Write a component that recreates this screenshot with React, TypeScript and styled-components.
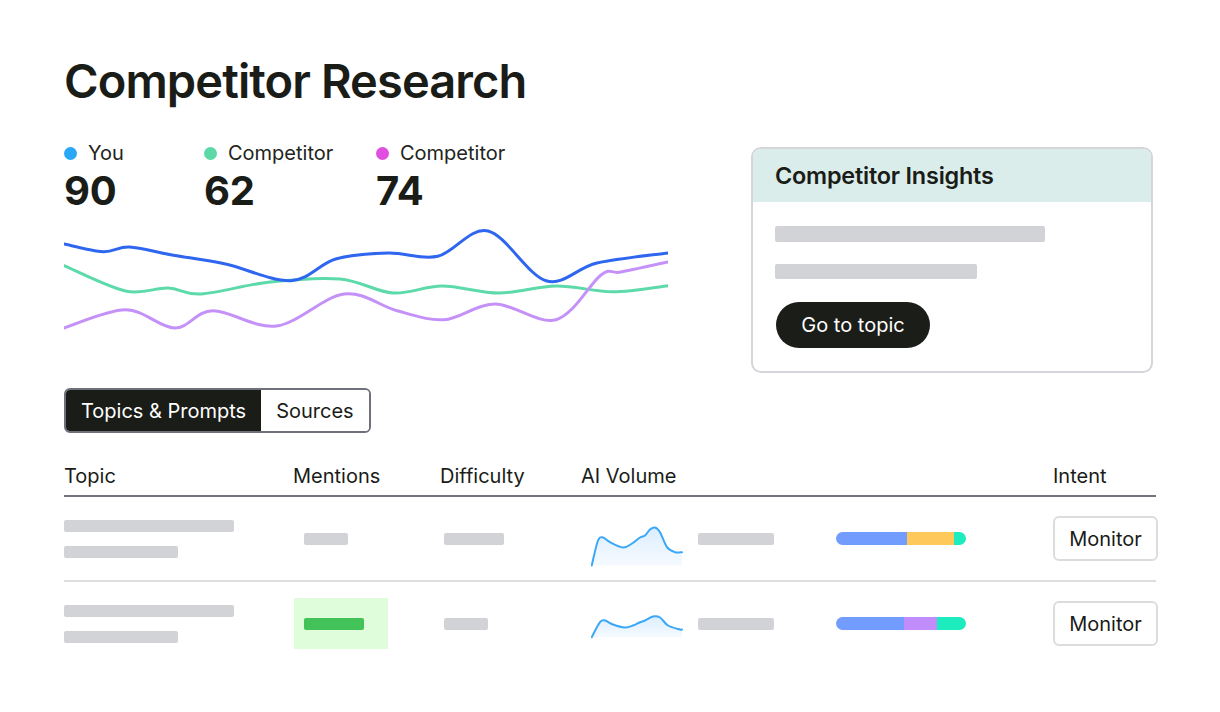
import React from "react";
import styled, { createGlobalStyle } from "styled-components";

const GlobalStyle = createGlobalStyle`
  html, body { margin: 0; padding: 0; background: #ffffff; }
  body { font-family: Inter, "Noto Sans", "Liberation Sans", sans-serif; color: #1a1c18; }
  * { box-sizing: border-box; }
`;

const INK = "#1a1c18";
const GRAY = "#d2d3d6";

type Pt = [number, number];

function smooth(pts: Pt[]): string {
  let d = `M${pts[0][0]},${pts[0][1]}`;
  for (let i = 0; i < pts.length - 1; i++) {
    const p0 = pts[i - 1] || pts[i];
    const p1 = pts[i];
    const p2 = pts[i + 1];
    const p3 = pts[i + 2] || p2;
    const c1x = p1[0] + (p2[0] - p0[0]) / 6;
    const c1y = p1[1] + (p2[1] - p0[1]) / 6;
    const c2x = p2[0] - (p3[0] - p1[0]) / 6;
    const c2y = p2[1] - (p3[1] - p1[1]) / 6;
    d += ` C${c1x.toFixed(1)},${c1y.toFixed(1)} ${c2x.toFixed(1)},${c2y.toFixed(1)} ${p2[0]},${p2[1]}`;
  }
  return d;
}

const bluePts: Pt[] = [
  [0, 19], [39, 26.7], [65.6, 22], [108, 30], [161.5, 39], [226.8, 55.7], [271.7, 34],
  [324.8, 28], [373.8, 31.3], [424, 6], [482, 55.7], [533, 38], [604, 28],
];
const greenPts: Pt[] = [
  [0, 40.7], [61.5, 66], [104, 63], [137, 69], [206, 57], [276, 54], [329, 68],
  [378, 61], [435, 68], [492, 61], [549, 66.7], [604, 60.7],
];
const purplePts: Pt[] = [
  [0, 103], [61.5, 84.7], [110.5, 103], [149, 85.7], [212.5, 101], [280, 69], [333, 85.7],
  [380, 94.7], [431, 79], [492, 94.7], [537, 50], [557, 47], [604, 37],
];

const spark1: Pt[] = [
  [0.7, 56.5], [7, 31.5], [12, 28.5], [19, 33.2], [32, 38.5], [41, 34.5], [49, 28.5],
  [54, 26.5], [59, 20.5], [64, 18.5], [69, 23.2], [76, 38.2], [84, 43.2], [91, 43.2],
];
const spark2: Pt[] = [
  [0.7, 43.2], [9, 28.2], [14, 26.5], [22, 30.5], [34, 33.5], [42, 31.5], [49, 28.2],
  [54, 26.5], [62, 22.5], [69, 23.5], [77, 31.5], [89, 35.5], [91, 35.5],
];

const Page = styled.div`
  width: 1092px;
  margin-left: 64px;
  padding-top: 52px;
`;

const Title = styled.h1`
  margin: 0;
  font-size: 47px;
  line-height: 58px;
  font-weight: 600;
  letter-spacing: -0.9px;
  color: ${INK};
`;

const TopRow = styled.div`
  display: flex;
  align-items: flex-start;
  gap: 83px;
  margin-top: 31px;
`;

const ChartColumn = styled.div`
  width: 604px;
  display: flex;
  flex-direction: column;
`;

const Legend = styled.div`
  display: flex;
`;

const LegendItem = styled.div<{ $w?: number }>`
  display: flex;
  flex-direction: column;
  gap: 2px;
  width: ${(p) => (p.$w ? `${p.$w}px` : "auto")};
`;

const LegendLabel = styled.div`
  display: flex;
  align-items: center;
  gap: 11px;
  font-size: 20px;
  line-height: 24px;
  color: #222420;
`;

const Dot = styled.span<{ $c: string }>`
  width: 13px;
  height: 13px;
  border-radius: 50%;
  background: ${(p) => p.$c};
  flex: none;
`;

const BigNumber = styled.div`
  font-size: 40px;
  line-height: 48px;
  font-weight: 700;
  color: ${INK};
  letter-spacing: -0.3px;
`;

const ChartSvg = styled.svg`
  display: block;
  margin-top: 10px;
`;

const Card = styled.div`
  width: 402px;
  margin-top: 6px;
  border: 2px solid #d6d6da;
  border-radius: 10px;
  overflow: hidden;
  background: #fff;
`;

const CardHeader = styled.div`
  height: 53px;
  display: flex;
  align-items: center;
  padding: 0 22px;
  background: #dbedea;
  font-size: 23.4px;
  font-weight: 600;
  letter-spacing: -0.2px;
  color: ${INK};
`;

const CardBody = styled.div`
  display: flex;
  flex-direction: column;
  align-items: flex-start;
  padding: 24px 22px 23px;
`;

const Bar = styled.div<{ $w: number; $h?: number; $c?: string; $mt?: number; $ml?: number }>`
  width: ${(p) => p.$w}px;
  height: ${(p) => p.$h ?? 12}px;
  background: ${(p) => p.$c ?? GRAY};
  border-radius: 2px;
  margin-top: ${(p) => p.$mt ?? 0}px;
  margin-left: ${(p) => p.$ml ?? 0}px;
  flex: none;
`;

const PillButton = styled.button`
  margin-top: 23px;
  margin-left: 1px;
  height: 46px;
  width: 154px;
  padding: 0;
  border: none;
  border-radius: 23px;
  background: #1b1d19;
  color: #fff;
  font-family: inherit;
  font-size: 20px;
`;

const Tabs = styled.div`
  display: inline-flex;
  margin-top: 15px;
  border: 2px solid #6e707a;
  border-radius: 6px;
  overflow: hidden;
`;

const Tab = styled.div<{ $active?: boolean }>`
  height: 41px;
  line-height: 42px;
  padding: 0 ${(p) => (p.$active ? 15 : 15)}px;
  font-size: 20px;
  background: ${(p) => (p.$active ? "#1a1c18" : "#fff")};
  color: ${(p) => (p.$active ? "#fff" : INK)};
`;

const cols = "229px 147px 141px 255px 217px 1fr";

const Table = styled.div`
  margin-top: 31px;
`;

const HeaderRow = styled.div`
  display: grid;
  grid-template-columns: ${cols};
  padding-bottom: 7px;
  border-bottom: 2px solid #72747c;
  font-size: 20px;
  line-height: 24px;
  color: ${INK};
`;

const Row = styled.div<{ $last?: boolean }>`
  display: grid;
  grid-template-columns: ${cols};
  align-items: center;
  height: ${(p) => (p.$last ? 83 : 85)}px;
  border-bottom: ${(p) => (p.$last ? "none" : "2px solid #dedede")};
`;

const TopicCell = styled.div`
  display: flex;
  flex-direction: column;
  gap: 14px;
`;

const MentionBox = styled.div<{ $hl?: boolean }>`
  width: 94px;
  height: 51px;
  margin-left: 1px;
  padding-left: 10px;
  display: flex;
  align-items: center;
  background: ${(p) => (p.$hl ? "#e0fddb" : "transparent")};
`;

const AiCell = styled.div`
  display: flex;
  align-items: center;
`;

const SparkSvg = styled.svg`
  display: block;
  margin-left: 10px;
  flex: none;
`;

const Stack = styled.div`
  display: flex;
  width: 130px;
  height: 13px;
  border-radius: 7px;
  overflow: hidden;
`;

const Seg = styled.div<{ $w: number; $c: string }>`
  width: ${(p) => p.$w}px;
  background: ${(p) => p.$c};
  flex: none;
`;

const MonitorButton = styled.button`
  width: 105px;
  height: 45px;
  border: 2px solid #dcdcdc;
  border-radius: 6px;
  background: #fff;
  font-family: inherit;
  font-size: 20px;
  color: ${INK};
  padding: 0;
`;

function Sparkline({ pts, id }: { pts: Pt[]; id: string }) {
  const line = smooth(pts);
  const last = pts[pts.length - 1];
  const bottom = Math.max(...pts.map((p) => p[1]));
  const area = `${line} L${last[0]},${bottom} L${pts[0][0]},${bottom} Z`;
  return (
    <SparkSvg width="92" height="60" viewBox="0 0 92 60">
      <defs>
        <linearGradient id={id} x1="0" y1="0" x2="0" y2="1">
          <stop offset="0" stopColor="#d6ebff" stopOpacity="0.9" />
          <stop offset="1" stopColor="#eef6ff" stopOpacity="0.6" />
        </linearGradient>
      </defs>
      <path d={area} fill={`url(#${id})`} />
      <path d={line} fill="none" stroke="#3aa8f5" strokeWidth="2" strokeLinecap="round" />
    </SparkSvg>
  );
}

type RowData = {
  mentionW: number;
  hl: boolean;
  diffW: number;
  spark: Pt[];
  segs: [number, string][];
};

const rows: RowData[] = [
  {
    mentionW: 44,
    hl: false,
    diffW: 60,
    spark: spark1,
    segs: [
      [71, "#739cff"],
      [47, "#ffc85a"],
      [12, "#1decbf"],
    ],
  },
  {
    mentionW: 60,
    hl: true,
    diffW: 44,
    spark: spark2,
    segs: [
      [68, "#739cff"],
      [33, "#c18cfb"],
      [29, "#1decbf"],
    ],
  },
];

export default function App() {
  return (
    <>
      <GlobalStyle />
      <Page>
        <Title>Competitor Research</Title>
        <TopRow>
          <ChartColumn>
            <Legend>
              <LegendItem $w={140}>
                <LegendLabel>
                  <Dot $c="#2aa8f8" />
                  You
                </LegendLabel>
                <BigNumber>90</BigNumber>
              </LegendItem>
              <LegendItem $w={172}>
                <LegendLabel>
                  <Dot $c="#5ad8a6" />
                  Competitor
                </LegendLabel>
                <BigNumber>62</BigNumber>
              </LegendItem>
              <LegendItem>
                <LegendLabel>
                  <Dot $c="#e14fe0" />
                  Competitor
                </LegendLabel>
                <BigNumber>74</BigNumber>
              </LegendItem>
            </Legend>
            <ChartSvg width="604" height="110" viewBox="0 0 604 110">
              <path d={smooth(greenPts)} fill="none" stroke="#5ddaa9" strokeWidth="3" strokeLinecap="round" />
              <path d={smooth(purplePts)} fill="none" stroke="#c491f8" strokeWidth="3" strokeLinecap="round" />
              <path d={smooth(bluePts)} fill="none" stroke="#2f66f0" strokeWidth="3" strokeLinecap="round" />
            </ChartSvg>
          </ChartColumn>
          <Card>
            <CardHeader>Competitor Insights</CardHeader>
            <CardBody>
              <Bar $w={270} $h={16} />
              <Bar $w={202} $h={15} $mt={22} />
              <PillButton>Go to topic</PillButton>
            </CardBody>
          </Card>
        </TopRow>

        <Tabs>
          <Tab $active>Topics &amp; Prompts</Tab>
          <Tab>Sources</Tab>
        </Tabs>

        <Table>
          <HeaderRow>
            <div>Topic</div>
            <div>Mentions</div>
            <div>Difficulty</div>
            <div>AI Volume</div>
            <div />
            <div>Intent</div>
          </HeaderRow>
          {rows.map((r, i) => (
            <Row key={i} $last={i === rows.length - 1}>
              <TopicCell>
                <Bar $w={170} />
                <Bar $w={114} />
              </TopicCell>
              <div>
                <MentionBox $hl={r.hl}>
                  <Bar $w={r.mentionW} $c={r.hl ? "#43c25a" : GRAY} />
                </MentionBox>
              </div>
              <div>
                <Bar $w={r.diffW} $ml={4} />
              </div>
              <AiCell>
                <Sparkline pts={r.spark} id={`sg${i}`} />
                <Bar $w={76} $ml={15} />
              </AiCell>
              <div>
                <Stack>
                  {r.segs.map(([w, c], j) => (
                    <Seg key={j} $w={w} $c={c} />
                  ))}
                </Stack>
              </div>
              <div>
                <MonitorButton>Monitor</MonitorButton>
              </div>
            </Row>
          ))}
        </Table>
      </Page>
    </>
  );
}
